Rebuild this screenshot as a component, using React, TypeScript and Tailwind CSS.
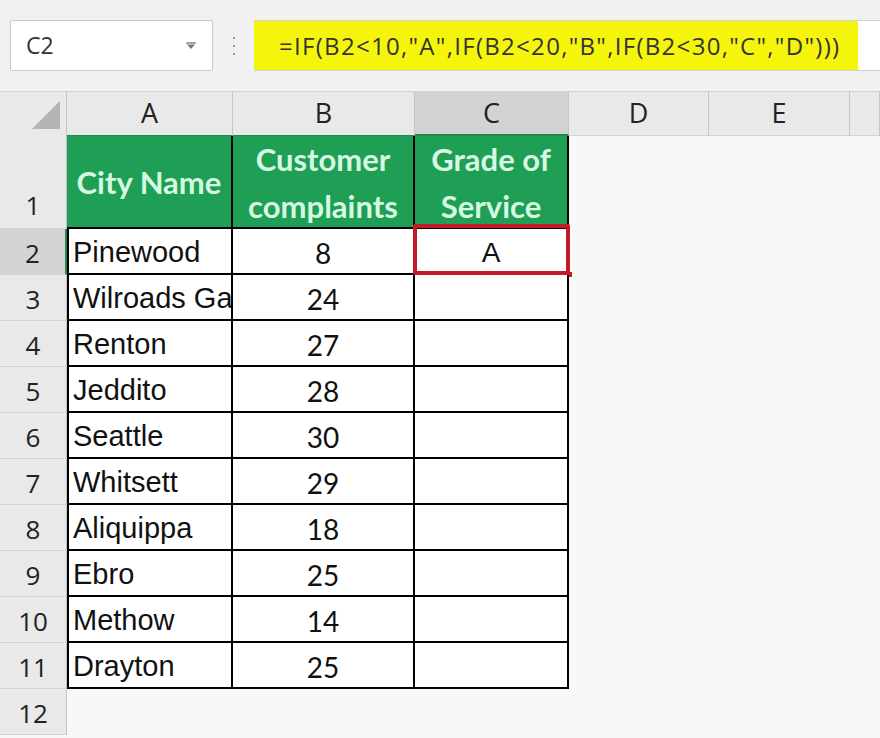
import React from "react";

const rows: [string, string][] = [
  ["Pinewood", "8"],
  ["Wilroads Gap", "24"],
  ["Renton", "27"],
  ["Jeddito", "28"],
  ["Seattle", "30"],
  ["Whitsett", "29"],
  ["Aliquippa", "18"],
  ["Ebro", "25"],
  ["Methow", "14"],
  ["Drayton", "25"],
];

function RowHead({ n, selected }: { n: number; selected?: boolean }) {
  return (
    <div
      className={
        "flex items-center justify-center pt-[3px] border-b border-[#d3d3d3] text-[26px] text-[#222] font-['Open_Sans',sans-serif] " +
        (selected
          ? "bg-[#d4d4d4] border-r-2 border-r-[#1f8a4c]"
          : "bg-[#e9e9e9] border-r border-r-[#c4c4c4]")
      }
    >
      {n}
    </div>
  );
}

export default function App() {
  return (
    <div className="w-[880px] h-[738px] overflow-hidden bg-[#f8f8f8] font-['Liberation_Sans',Arial,sans-serif]">
      {/* toolbar */}
      <div className="h-[91px] bg-[#f1f1f1] flex items-start pt-[20px]">
        <div className="ml-[10px] w-[203px] h-[51px] bg-white border border-[#c9c9c9] rounded-[2px] flex items-center justify-between pl-[15px] pr-[15px]">
          <span className="text-[23px] text-[#333] font-['Open_Sans',sans-serif]">C2</span>
          <svg width="12" height="8" viewBox="0 0 12 8">
            <path d="M1 1 L11 1" stroke="#888" strokeWidth="1.5" />
            <path d="M2 2.5 L10 2.5 L6 7 Z" fill="#777" />
          </svg>
        </div>
        <div className="w-[41px] h-[51px] flex flex-col items-center justify-center gap-[6px]">
          <div className="w-[2px] h-[2px] bg-[#9a9a9a]" />
          <div className="w-[2px] h-[2px] bg-[#9a9a9a]" />
          <div className="w-[2px] h-[2px] bg-[#9a9a9a]" />
        </div>
        <div className="flex-1 h-[51px] bg-white border-y border-[#d2d2d2] flex">
          <div className="w-[604px] h-full bg-[#f5f50c] flex items-center pl-[25px] text-[24px] tracking-[1.3px] text-[#333] font-['Open_Sans',sans-serif] whitespace-nowrap">
            =IF(B2&lt;10,"A",IF(B2&lt;20,"B",IF(B2&lt;30,"C","D")))
          </div>
        </div>
      </div>

      {/* sheet */}
      <div className="grid grid-cols-[67px_166px_182px_154px_140px_141px_30px] grid-rows-[45px_93px_repeat(11,46px)]">
        {/* column headers */}
        <div className="bg-[#e9e9e9] border-t border-[#d3d3d3] border-r border-r-[#c4c4c4] relative">
          <svg className="absolute left-[32px] top-[9px]" width="28" height="28" viewBox="0 0 28 28">
            <path d="M28 0 L28 28 L0 28 Z" fill="#b4b4b4" />
          </svg>
        </div>
        {["A", "B", "C", "D", "E", ""].map((c) => (
          <div
            key={c || "F"}
            className={
              "flex items-center justify-center border-t border-[#d3d3d3] border-r border-r-[#c4c4c4] text-[27px] text-[#222] font-['Open_Sans',sans-serif] " +
              (c === "C"
                ? "bg-[#d3d3d3] border-b-2 border-b-[#1f8a4c]"
                : c === "A" || c === "B"
                ? "bg-[#e9e9e9] border-b border-b-[#1f8a4c]"
                : "bg-[#e9e9e9] border-b border-b-[#d3d3d3]")
            }
          >
            {c}
          </div>
        ))}

        {/* row 1 */}
        <div className="bg-[#e9e9e9] border-r border-r-[#c4c4c4] border-b border-[#d3d3d3] flex items-end justify-center pb-[3px] text-[26px] text-[#222] font-['Open_Sans',sans-serif]">
          1
        </div>
        <div className="bg-[#1f9f55] border-r-2 border-b-2 border-black flex items-center justify-center pt-[2px] text-[31px] font-bold text-[#d6f9e2] font-['Lato',sans-serif] leading-[47px]">
          City Name
        </div>
        <div className="bg-[#1f9f55] border-r-2 border-b-2 border-black flex flex-col items-center justify-center pt-[2px] text-[31px] font-bold text-[#d6f9e2] font-['Lato',sans-serif] leading-[47px]">
          <span>Customer</span>
          <span>complaints</span>
        </div>
        <div className="bg-[#1f9f55] border-r-2 border-b-2 border-black flex flex-col items-center justify-center pt-[2px] text-[31px] font-bold text-[#d6f9e2] font-['Lato',sans-serif] leading-[47px]">
          <span>Grade of</span>
          <span>Service</span>
        </div>
        <div />
        <div />
        <div />

        {rows.map(([city, val], i) => (
          <React.Fragment key={city}>
            <RowHead n={i + 2} selected={i === 0} />
            <div className="bg-white border-l-2 border-r-2 border-b-2 border-black overflow-hidden whitespace-nowrap flex items-center pl-[4px] pt-[4px] text-[29px] text-[#111]">
              {city}
            </div>
            <div className="bg-white border-r-2 border-b-2 border-black flex items-center justify-center pt-[3px] text-[28px] text-[#111] font-['Lato',sans-serif]">
              {val}
            </div>
            <div className="bg-white border-r-2 border-b-2 border-black flex items-center justify-center pt-[3px] text-[28px] text-[#111] font-['Lato',sans-serif] relative">
              {i === 0 && (
                <>
                  <span className="font-['Liberation_Sans',Arial,sans-serif] text-[28px]">A</span>
                  <div className="absolute left-[-2px] top-[-5px] right-[-3px] bottom-[-2px] border-[4px] border-[#c21a26] rounded-[2px]" />
                  <div className="absolute right-[-5px] bottom-[-4px] w-[5px] h-[5px] bg-[#c21a26]" />
                </>
              )}
            </div>
            <div />
            <div />
            <div />
          </React.Fragment>
        ))}

        {/* row 12 */}
        <RowHead n={12} />
        <div />
        <div />
        <div />
        <div />
        <div />
        <div />
      </div>
    </div>
  );
}
